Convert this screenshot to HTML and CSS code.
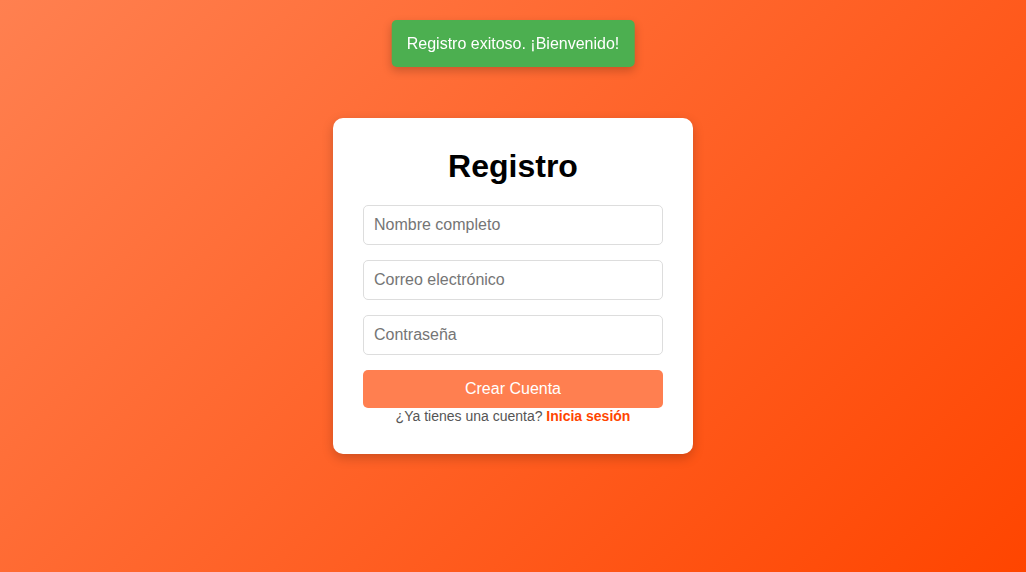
FILE: index.html
```html
<!DOCTYPE html>
<html lang="es">
<head>
<meta charset="utf-8">
<title>Registro</title>
<link rel="stylesheet" href="styles.css">
</head>
<body>
<div class="toast">Registro exitoso. ¡Bienvenido!</div>
<div class="card">
  <h2 class="title">Registro</h2>
  <form class="form">
    <input class="field" type="text" placeholder="Nombre completo">
    <input class="field" type="email" placeholder="Correo electrónico">
    <input class="field" type="password" placeholder="Contraseña">
    <button class="btn" type="button">Crear Cuenta</button>
  </form>
  <p class="alt">¿Ya tienes una cuenta? <a class="link" href="#">Inicia sesión</a></p>
</div>
</body>
</html>
```

FILE: styles.css
```css
* { box-sizing: border-box; }
html, body { height: 100%; }
body {
  margin: 0;
  font-family: "Liberation Sans", Arial, sans-serif;
  background: linear-gradient(135deg, #ff8050 0%, #ff4500 100%);
  display: flex;
  align-items: center;
  justify-content: center;
  overflow: hidden;
}
.toast {
  position: fixed;
  top: 20px;
  left: 50%;
  transform: translateX(-50%);
  background: #4caf50;
  color: #fff;
  font-size: 16px;
  line-height: 17px;
  padding: 15px 15px;
  border-radius: 5px;
  box-shadow: 0 4px 10px rgba(0,0,0,0.2);
  white-space: nowrap;
}
.card {
  width: 360px;
  background: #fff;
  border-radius: 10px;
  padding: 30px;
  box-shadow: 0 4px 12px rgba(0,0,0,0.2);
  text-align: center;
}
.title {
  margin: 0 0 20px;
  font-size: 32px;
  line-height: 37px;
  font-weight: bold;
  color: #000;
}
.form {
  display: flex;
  flex-direction: column;
  gap: 15px;
}
.field {
  width: 100%;
  height: 40px;
  padding: 10px;
  font-family: inherit;
  font-size: 16px;
  border: 1px solid #ddd;
  border-radius: 5px;
  color: #333;
  outline: none;
}
.field::placeholder { color: #757575; }
.btn {
  width: 100%;
  height: 38px;
  border: none;
  border-radius: 5px;
  background: #ff7f50;
  color: #fff;
  font-family: inherit;
  font-size: 16px;
  cursor: pointer;
}
.alt {
  margin: 0;
  font-size: 14px;
  line-height: 16px;
  color: #555;
}
.link {
  color: #ff4500;
  font-weight: bold;
  text-decoration: none;
}
```
